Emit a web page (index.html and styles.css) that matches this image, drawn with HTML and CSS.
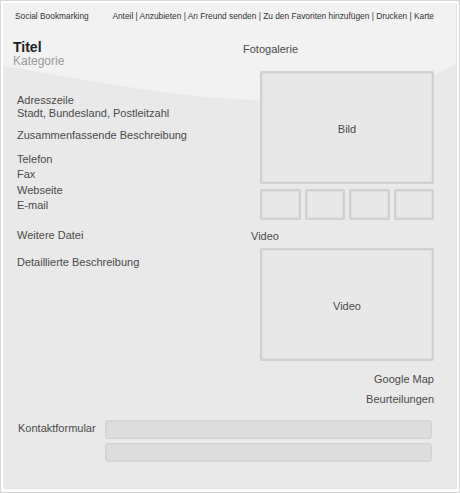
FILE: index.html
```html
<!DOCTYPE html>
<html lang="de">
<head>
<meta charset="utf-8">
<title>Eintrag</title>
<link rel="stylesheet" href="styles.css">
</head>
<body>
<div class="frame">
  <div class="panel">
    <svg class="panel-bg" viewBox="3 3 453 485" preserveAspectRatio="none" aria-hidden="true">
      <rect x="3" y="3" width="453" height="485" fill="#e9e9e9"/>
      <path d="M3,3 L456,3 L456,64 C420,85 360,100 270,100 C180,100 80,78 3,66 Z" fill="#f2f2f2"/>
    </svg>
    <div class="topbar">
      <span class="social">Social Bookmarking</span>
      <span class="tools">Anteil | Anzubieten | An Freund senden | Zu den Favoriten hinzufügen | Drucken | Karte</span>
    </div>
    <div class="main">
      <div class="left">
        <div class="title">Titel</div>
        <div class="category">Kategorie</div>
        <div class="address">
          <div>Adresszeile</div>
          <div>Stadt, Bundesland, Postleitzahl</div>
        </div>
        <div class="summary">Zusammenfassende Beschreibung</div>
        <div class="contacts">
          <div>Telefon</div>
          <div>Fax</div>
          <div>Webseite</div>
          <div>E-mail</div>
        </div>
        <div class="file">Weitere Datei</div>
        <div class="detail">Detaillierte Beschreibung</div>
      </div>
      <div class="right">
        <div class="gallery-label">Fotogalerie</div>
        <div class="box big photo">Bild</div>
        <div class="thumbs">
          <div class="box thumb"></div>
          <div class="box thumb"></div>
          <div class="box thumb"></div>
          <div class="box thumb"></div>
        </div>
        <div class="video-label">Video</div>
        <div class="box big video">Video</div>
        <div class="map">Google Map</div>
        <div class="reviews">Beurteilungen</div>
      </div>
    </div>
    <div class="contact">
      <div class="contact-label">Kontaktformular</div>
      <div class="fields">
        <div class="field"></div>
        <div class="field"></div>
      </div>
    </div>
  </div>
</div>
</body>
</html>
```

FILE: styles.css
```css
html, body {
  margin: 0;
  padding: 0;
  background: #ffffff;
}

body {
  font-family: "Liberation Sans", Arial, sans-serif;
  color: #4a4a4a;
}

.frame {
  width: 460px;
  height: 493px;
  box-sizing: border-box;
  border: 1px solid #d6d6d6;
  padding: 2px 3px 4px 2px;
}

.panel {
  position: relative;
  height: 485px;
  box-shadow: 1px 1px 1px rgba(0, 0, 0, 0.10);
  overflow: hidden;
}

.panel-bg {
  position: absolute;
  left: 0;
  top: 0;
  width: 100%;
  height: 100%;
  z-index: 0;
}

.topbar,
.main,
.contact {
  position: relative;
  z-index: 1;
}

.topbar {
  display: flex;
  justify-content: space-between;
  padding: 8px 22px 0 12px;
  font-size: 8.35px;
  line-height: 10px;
  color: #333;
}

.main {
  display: grid;
  grid-template-columns: 1fr 191px;
  padding: 18px 22px 0 10px;
  font-size: 11px;
  line-height: 13px;
}

.title {
  font-size: 14px;
  font-weight: bold;
  line-height: 16px;
  color: #222;
}

.category {
  font-size: 12px;
  line-height: 12px;
  color: #9a9a9a;
}

.address,
.summary,
.contacts,
.file,
.detail {
  padding-left: 4px;
}

.address { margin-top: 27px; }
.summary { margin-top: 9px; }
.contacts { margin-top: 10px; line-height: 15.3px; }
.file { margin-top: 16px; }
.detail { margin-top: 14px; }

.gallery-label { margin-top: 4px; }

.box {
  box-sizing: border-box;
  border: 2px solid #d0d0d0;
  border-radius: 2px;
  background: #e8e8e8;
  box-shadow: inset 0 0 0 1px #dedede;
}

.big {
  margin-left: 17px;
  padding-top: 3px;
  display: flex;
  align-items: center;
  justify-content: center;
}

.photo {
  margin-top: 15px;
  height: 113px;
}

.thumbs {
  margin: 5px 0 0 17px;
  display: grid;
  grid-template-columns: repeat(4, 1fr);
  gap: 4px;
}

.thumb { height: 31px; }

.video-label {
  margin: 10px 0 0 8px;
}

.video {
  margin-top: 5px;
  height: 113px;
}

.map,
.reviews {
  text-align: right;
}

.map { margin-top: 12px; }
.reviews { margin-top: 7px; }

.contact {
  display: grid;
  grid-template-columns: 87px 327px;
  margin: 14px 0 0 15px;
  font-size: 11px;
  line-height: 13px;
}

.contact-label {
  padding-top: 2px;
}

.fields {
  display: flex;
  flex-direction: column;
  gap: 4px;
}

.field {
  height: 19px;
  box-sizing: border-box;
  border: 1px solid #d2d2d2;
  border-radius: 3px;
  background: #dcdcdc;
  box-shadow: inset 0 0 0 1px #d8d8d8;
}
```
